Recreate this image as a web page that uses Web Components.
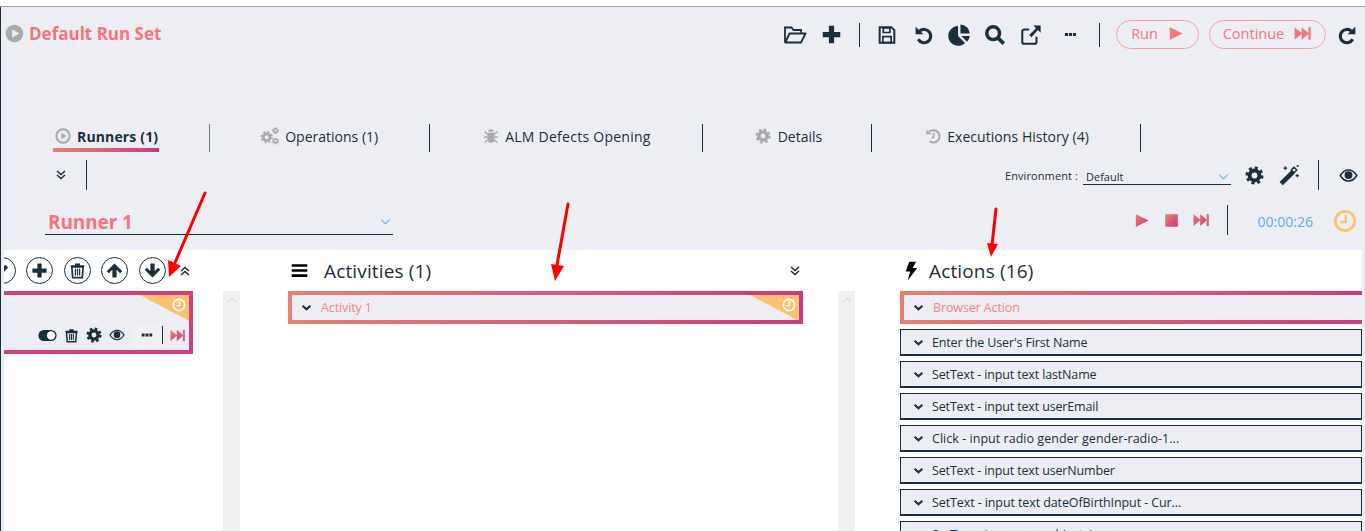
<!DOCTYPE html>
<html>
<head>
<meta charset="utf-8">
<title>Run Set</title>
<style>
    html, body { margin: 0; padding: 0; background: #fff; }
    body { font-family: "Open Sans", "Liberation Sans", sans-serif; color: #1a2e3b; }
</style>
</head>
<body>
<run-page></run-page>

<script>
const GEAR = '<circle cx="12" cy="12" r="6.2" fill="none" stroke="currentColor" stroke-width="5"/><circle cx="12" cy="12" r="9.6" fill="none" stroke="currentColor" stroke-width="3.6" stroke-dasharray="3.8 3.74"/>';

const ICONS = {
    folder: '<path d="M2 19.5V4.5h6.5l2 2.5H18v3.5" fill="none" stroke="currentColor" stroke-width="1.8"/><path d="M2.3 19.5 6.5 10.5H22.5L18 19.5Z" fill="none" stroke="currentColor" stroke-width="1.8" stroke-linejoin="round"/>',
    plus: '<path d="M9 2h6v7h7v6h-7v7H9v-7H2V9h7z" fill="currentColor"/>',
    save: '<path d="M3.2 2.6h14l3.6 3.6v15.2H3.2z" fill="none" stroke="currentColor" stroke-width="2.4"/><path d="M7.5 3.5h8V9h-8z" fill="none" stroke="currentColor" stroke-width="2"/><path d="M7 14h10v7H7z" fill="none" stroke="currentColor" stroke-width="2"/>',
    undo: '<path d="M7.5 8.2A7.6 7.6 0 1 1 6 17.5" fill="none" stroke="currentColor" stroke-width="3.6"/><path d="M3 3 12 11.8H3z" fill="currentColor"/>',
    redo: '<path d="M16.5 8.2A7.6 7.6 0 1 0 18 17.5" fill="none" stroke="currentColor" stroke-width="3.6"/><path d="M21 3 12 11.8H21z" fill="currentColor"/>',
    pie: '<path d="M10.5 3.2V13.5l7.3 7.3A10.3 10.3 0 1 1 10.5 3.2Z" fill="currentColor"/><path d="M13 1.5A10 10 0 0 1 22.7 11H13Z" fill="currentColor"/><path d="M14 13.5h8.7a10 10 0 0 1-2.900 6Z" fill="currentColor"/>',
    search: '<circle cx="10" cy="10" r="7" fill="none" stroke="currentColor" stroke-width="3.8"/><path d="M15 15 21.5 21.5" stroke="currentColor" stroke-width="4.2"/>',
    external: '<path d="M18 14v5.5a2 2 0 0 1-2 2H4.500a2 2 0 0 1-2-2V8a2 2 0 0 1 2-2H10" fill="none" stroke="currentColor" stroke-width="2.2"/><path d="M14.5 1.5h8v8l-3-3-7 8-2.500-2.500 7.500-7.500z" fill="currentColor"/>',
    dots: '<path d="M3 9.500h5v5H3zM9.500 9.500h5v5h-5zM16 9.500h5v5h-5z" fill="currentColor"/>',
    play: '<path d="M4 3 22 12 4 21Z" fill="currentColor"/>',
    forward: '<path d="M2 4 11.500 12 2 20ZM11 4 20 12 11 20Z" fill="currentColor"/><path d="M19.500 4h2.800v16h-2.800z" fill="currentColor"/>',
    stop: '<path d="M2 2h20v20H2z" fill="currentColor"/>',
    gear: GEAR,
    wand: '<path d="M3.5 21.5 16.5 8.5" stroke="currentColor" stroke-width="5"/><path d="M14.5 6.5 17.5 3.5l3 3-3 3z" fill="#edeef3" stroke="currentColor" stroke-width="1.5"/><path d="M8 2.500v4M6 4.500h4M21 11v3.500M19.200 12.700h3.600M21.500 1v2.400M20.300 2.200h2.400" stroke="currentColor" stroke-width="1.2"/>',
    eye: '<path d="M1.5 12C5 6.5 9 5 12 5s7 1.500 10.500 7C19 17.500 15 19 12 19S5 17.500 1.500 12Z" fill="none" stroke="currentColor" stroke-width="1.9"/><circle cx="12" cy="11.5" r="5" fill="currentColor"/>',
    clock: '<circle cx="12" cy="12" r="9.7" fill="none" stroke="currentColor" stroke-width="2.8"/><path d="M12.8 6v7H7.500" fill="none" stroke="currentColor" stroke-width="2.3"/>',
    toggle: '<rect x="0.5" y="5" width="23" height="14" rx="7" fill="currentColor"/><circle cx="16.5" cy="12" r="5.3" fill="#fff"/>',
    trash: '<path d="M4 7h16l-1.200 15H5.200Z" fill="none" stroke="currentColor" stroke-width="2.4"/><path d="M2.500 4.500h19v2.700h-19zM8.500 2h7v2.500h-7z" fill="currentColor"/><path d="M9 9.500V19M12 9.500V19M15 9.500V19" stroke="currentColor" stroke-width="1.8"/>',
    up: '<path d="M12 2 23 13l-3 3-5-5v11H9V11l-5 5-3-3Z" fill="currentColor"/>',
    down: '<path d="M12 22 1 11l3-3 5 5V2h6v11l5-5 3 3Z" fill="currentColor"/>',
    pencil: '<path d="M4 20 5.500 14.500 16 4l4 4L9.500 18.500Z" fill="currentColor"/>',
    chev: '<path d="M3.5 8 12 16 20.500 8" fill="none" stroke="currentColor" stroke-width="4.5"/>',
    chevthin: '<path d="M3 8 12 17 21 8" fill="none" stroke="currentColor" stroke-width="2.2"/>',
    chevup: '<path d="M3 16 12 7 21 16" fill="none" stroke="currentColor" stroke-width="2.2"/>',
    dchevdown: '<path d="M4 4 12 11 20 4M4 12 12 19 20 12" fill="none" stroke="currentColor" stroke-width="3"/>',
    dchevup: '<path d="M4 20 12 13 20 20M4 12 12 5 20 12" fill="none" stroke="currentColor" stroke-width="3"/>',
    bars: '<path d="M1 3h22v3.600H1zM1 10.200h22v3.600H1zM1 17.400h22v3.600H1z" fill="currentColor"/>',
    bolt: '<path d="M10 1h8l-4 7.500h5.500L8 23.500l3-11H5.500Z" fill="currentColor"/>',
    circleplay: '<circle cx="12" cy="12" r="11" fill="currentColor"/><path d="M9 6.500 18 12 9 17.500Z" fill="#edeef3"/>',
    ringplay: '<circle cx="12" cy="12" r="10" fill="none" stroke="currentColor" stroke-width="3"/><path d="M9.500 7 17 12 9.500 17Z" fill="currentColor"/>',
    bug: '<path d="M8 5.500a4 3.500 0 0 1 8 0Z" fill="currentColor"/><path d="M6.500 7h11v9.500a5.500 5.500 0 0 1-11 0Z" fill="currentColor"/><path d="M6.500 9 2.500 5.500M17.500 9l4-3.500M6 13.500H1.500M18 13.500h4.500M6.800 18 2.500 22M17.200 18l4.300 4" stroke="currentColor" stroke-width="2.2"/>',
    cogs: '<g transform="translate(-1 5) scale(.72)">' + GEAR + '</g><g transform="translate(14.5 0) scale(.4)">' + GEAR + '</g><g transform="translate(14.5 14) scale(.4)">' + GEAR + '</g>',
    history: '<path d="M6.500 5.500A9.300 9.300 0 1 1 7 20" fill="none" stroke="currentColor" stroke-width="3"/><path d="M2 2.500 10 9.500H2z" fill="currentColor"/><path d="M13 7.500V13l-3 2.500" fill="none" stroke="currentColor" stroke-width="2.3"/>'
};

// icone svg, la couleur vient de color ou du degrade (attribut grad)
class RsIcon extends HTMLElement {
    constructor() {
        super();
        this.attachShadow({ mode: 'open' });
    }

    connectedCallback() {
        const size = this.getAttribute('size') || 18;
        const grad = this.hasAttribute('grad');
        this.shadowRoot.innerHTML = `
            <style>
                :host { display: inline-flex; flex: none; width: ${size}px; height: ${size}px; }
                svg { width: 100%; height: 100%; display: block; overflow: visible; }
                ${grad ? 'svg [fill="currentColor"] { fill: url(#g); }' : ''}
            </style>
            <svg viewBox="0 0 24 24">
                <defs>
                    <linearGradient id="g" x1="0" y1="0" x2="1" y2="1">
                        <stop offset="0" stop-color="#e8806f"/>
                        <stop offset="1" stop-color="#cb3a80"/>
                    </linearGradient>
                </defs>
                ${ICONS[this.getAttribute('name')] || ''}
            </svg>
        `;
    }
}
customElements.define('rs-icon', RsIcon);

class RsPillButton extends HTMLElement {
    constructor() {
        super();
        this.attachShadow({ mode: 'open' });
        this.shadowRoot.innerHTML = `
            <style>
                :host {
                    display: inline-flex;
                    align-items: center;
                    justify-content: center;
                    gap: 9px;
                    height: 29px;
                    box-sizing: border-box;
                    border: 1px solid #f7a0a4;
                    border-radius: 15px;
                    background: #edeef3;
                    color: #f7747a;
                    font-size: 14.5px;
                    padding-bottom: 2px;
                }
            </style>
            <slot></slot>
        `;
    }
}
customElements.define('rs-pill-button', RsPillButton);

class RsTab extends HTMLElement {
    constructor() {
        super();
        this.attachShadow({ mode: 'open' });
    }

    connectedCallback() {
        const active = this.hasAttribute('active');
        this.shadowRoot.innerHTML = `
            <style>
                :host {
                    display: flex;
                    align-items: center;
                    height: 28px;
                    padding: 0 50px 0 51px;
                    border-right: 1px solid #1a2e3b;
                    font-size: 14px;
                    white-space: nowrap;
                    color: #1a2e3b;
                }
                :host([active]) {
                    padding: 0 50px 0 0;
                    font-weight: 700;
                    letter-spacing: 0.15px;
                    border-right-color: #6c7680;
                }
                .inner {
                    display: flex;
                    align-items: center;
                    gap: var(--tab-gap, 6px);
                    height: 28px;
                    box-sizing: border-box;
                    padding: 0 1px 0 2px;
                    border-bottom: 4px solid transparent;
                    ${active ? 'border-image: linear-gradient(90deg, #e8806f, #cb3a80) 1;' : ''}
                }
                rs-icon { color: #a9a9a9; }
            </style>
            <div class="inner">
                <rs-icon name="${this.getAttribute('icon')}" size="${this.getAttribute('size') || 16}"></rs-icon>
                <span><slot></slot></span>
            </div>
        `;
    }
}
customElements.define('rs-tab', RsTab);

// carte avec bordure en degrade
class RsCard extends HTMLElement {
    constructor() {
        super();
        this.attachShadow({ mode: 'open' });
        this.shadowRoot.innerHTML = `
            <style>
                :host {
                    display: flex;
                    align-items: center;
                    gap: 9px;
                    position: relative;
                    box-sizing: border-box;
                    height: 33px;
                    padding: 0 0 0 9px;
                    border: 4px solid;
                    border-image: linear-gradient(90deg, #e8806f, #cb3a80) 1;
                    background: #edeef3;
                    color: #f7848a;
                    font-size: 12.5px;
                    letter-spacing: -0.12px;
                    overflow: hidden;
                }
                rs-icon { color: #1a2e3b; }
            </style>
            <rs-icon name="chev" size="11"></rs-icon>
            <slot></slot>
        `;
    }
}
customElements.define('rs-card', RsCard);

class RsCorner extends HTMLElement {
    constructor() {
        super();
        this.attachShadow({ mode: 'open' });
        this.shadowRoot.innerHTML = `
            <style>
                :host { position: absolute; top: 0; right: 0; width: 49px; height: 26px; display: block; }
                .tri { position: absolute; inset: 0; background: #fdc271; clip-path: polygon(0 0, 100% 0, 100% 100%); }
                rs-icon { position: absolute; top: 3px; right: 3px; color: #fff; }
            </style>
            <div class="tri"></div>
            <rs-icon name="clock" size="14"></rs-icon>
        `;
    }
}
customElements.define('rs-corner', RsCorner);

class RsActionRow extends HTMLElement {
    constructor() {
        super();
        this.attachShadow({ mode: 'open' });
        this.shadowRoot.innerHTML = `
            <style>
                :host {
                    display: flex;
                    flex: none;
                    align-items: center;
                    gap: 8px;
                    box-sizing: border-box;
                    height: 27px;
                    padding: 0 0 0 12px;
                    border: 1px solid #1a2e3b;
                    border-bottom-width: 2px;
                    background: #edeef3;
                    font-size: 12.5px;
                    letter-spacing: -0.15px;
                    white-space: nowrap;
                }
            </style>
            <rs-icon name="chev" size="11"></rs-icon>
            <slot></slot>
        `;
    }
}
customElements.define('rs-action-row', RsActionRow);

class RsRoundButton extends HTMLElement {
    constructor() {
        super();
        this.attachShadow({ mode: 'open' });
    }

    connectedCallback() {
        this.shadowRoot.innerHTML = `
            <style>
                :host {
                    display: inline-flex;
                    flex: none;
                    align-items: center;
                    justify-content: center;
                    box-sizing: border-box;
                    width: 27px;
                    height: 27px;
                    border: 1px solid #1a2e3b;
                    border-radius: 50%;
                    background: #fff;
                    color: #1a2e3b;
                }
            </style>
            <rs-icon name="${this.getAttribute('icon')}" size="17"></rs-icon>
        `;
    }
}
customElements.define('rs-round-button', RsRoundButton);

class RsScrollTrack extends HTMLElement {
    constructor() {
        super();
        this.attachShadow({ mode: 'open' });
        this.shadowRoot.innerHTML = `
            <style>
                :host {
                    display: flex;
                    flex: none;
                    justify-content: center;
                    width: 17px;
                    padding-top: 4px;
                    background: #f1f1f1;
                    color: #cfcfcf;
                    box-sizing: border-box;
                }
            </style>
            <rs-icon name="chevup" size="10"></rs-icon>
        `;
    }
}
customElements.define('rs-scroll-track', RsScrollTrack);

class RunHeader extends HTMLElement {
    constructor() {
        super();
        this.attachShadow({ mode: 'open' });
        this.shadowRoot.innerHTML = `
            <style>
                :host {
                    display: flex;
                    justify-content: space-between;
                    align-items: flex-start;
                    height: 117px;
                    box-sizing: border-box;
                    padding: 13px 7px 0 4px;
                }
                .title {
                    display: flex;
                    align-items: center;
                    gap: 5px;
                    height: 27px;
                    color: #f7747a;
                    font-size: 17px;
                    font-weight: 700;
                }
                .title rs-icon { color: #a9a9a9; }
                .tools { display: flex; align-items: center; height: 29px; }
                .cell { display: flex; justify-content: center; width: 36px; }
                .sep { width: 1px; height: 24px; background: #1a2e3b; }
                .btn-run { width: 83px; margin-left: 16px; }
                .btn-continue { width: 117px; margin-left: 10px; margin-right: 11px; }
            </style>
            <div class="title">
                <rs-icon name="circleplay" size="19"></rs-icon>
                <span>Default Run Set</span>
            </div>
            <div class="tools">
                <div class="cell"><rs-icon name="folder" size="24"></rs-icon></div>
                <div class="cell"><rs-icon name="plus" size="21"></rs-icon></div>
                <div class="sep" style="margin: 0 9px 0 10px"></div>
                <div class="cell"><rs-icon name="save" size="20"></rs-icon></div>
                <div class="cell"><rs-icon name="undo" size="21"></rs-icon></div>
                <div class="cell"><rs-icon name="pie" size="23"></rs-icon></div>
                <div class="cell"><rs-icon name="search" size="22"></rs-icon></div>
                <div class="cell"><rs-icon name="external" size="22"></rs-icon></div>
                <div class="cell" style="margin-left: 3px"><rs-icon name="dots" size="15"></rs-icon></div>
                <div class="sep" style="margin: 0 0 0 11px"></div>
                <rs-pill-button class="btn-run">Run <rs-icon name="play" size="17"></rs-icon></rs-pill-button>
                <rs-pill-button class="btn-continue">Continue <rs-icon name="forward" size="19"></rs-icon></rs-pill-button>
                <rs-icon name="redo" size="21"></rs-icon>
            </div>
        `;
    }
}
customElements.define('run-header', RunHeader);

class RunTabs extends HTMLElement {
    constructor() {
        super();
        this.attachShadow({ mode: 'open' });
        this.shadowRoot.innerHTML = `
            <style>
                :host { display: flex; height: 28px; padding-left: 52px; }
            </style>
            <rs-tab active icon="ringplay">Runners (1)</rs-tab>
            <rs-tab icon="cogs" size="18" style="padding-left: 49px">Operations (1)</rs-tab>
            <rs-tab icon="bug" style="letter-spacing: 0.26px">ALM Defects Opening</rs-tab>
            <rs-tab icon="gear" style="padding: 0 48px 0 50px; --tab-gap: 7px">Details</rs-tab>
            <rs-tab icon="history" style="letter-spacing: 0.05px">Executions History (4)</rs-tab>
        `;
    }
}
customElements.define('run-tabs', RunTabs);

class EnvBar extends HTMLElement {
    constructor() {
        super();
        this.attachShadow({ mode: 'open' });
        this.shadowRoot.innerHTML = `
            <style>
                :host {
                    display: flex;
                    align-items: center;
                    height: 30px;
                    margin-top: 8px;
                    padding-left: 54px;
                    font-size: 11px;
                }
                .sep { width: 1px; height: 30px; background: #1a2e3b; flex: none; }
                .label { margin-left: auto; white-space: nowrap; letter-spacing: 0.1px; }
                .select {
                    display: flex;
                    align-items: center;
                    justify-content: space-between;
                    box-sizing: border-box;
                    width: 148px;
                    height: 20px;
                    margin: 0 14px 0 5px;
                    padding: 3px 2px 0 3px;
                    border-bottom: 1px solid #1a2e3b;
                }
                .select rs-icon { color: #5aa9f8; }
            </style>
            <rs-icon name="dchevdown" size="12"></rs-icon>
            <div class="sep" style="margin-left: 19px"></div>
            <span class="label">Environment :</span>
            <div class="select"><span>Default</span><rs-icon name="chevthin" size="11"></rs-icon></div>
            <rs-icon name="gear" size="19"></rs-icon>
            <rs-icon name="wand" size="22" style="margin-left: 14px"></rs-icon>
            <div class="sep" style="margin: 0 20px 0 18px"></div>
            <rs-icon name="eye" size="19" style="margin-right: 7px"></rs-icon>
        `;
    }
}
customElements.define('env-bar', EnvBar);

class RunnerBar extends HTMLElement {
    constructor() {
        super();
        this.attachShadow({ mode: 'open' });
        this.shadowRoot.innerHTML = `
            <style>
                :host {
                    display: flex;
                    align-items: flex-start;
                    height: 45px;
                    margin-top: 15px;
                    padding-left: 44px;
                }
                .select {
                    display: flex;
                    align-items: center;
                    justify-content: space-between;
                    box-sizing: border-box;
                    width: 348px;
                    height: 30px;
                    padding: 4px 2px 0 3px;
                    border-bottom: 1px solid #1a2e3b;
                    color: #f7747a;
                    font-size: 19px;
                    font-weight: 700;
                    letter-spacing: -0.1px;
                }
                .select rs-icon { color: #5aa9f8; }
                .ctl { display: flex; align-items: center; height: 30px; margin-left: auto; }
                .sep { width: 1px; height: 30px; background: #1a2e3b; }
                .time { color: #5aa9f8; font-size: 14px; margin: 2px 0 0 30px; }
                .clock { color: #fdc271; margin: 2px 8px 0 20px; }
            </style>
            <div class="select"><span>Runner 1</span><rs-icon name="chevthin" size="11"></rs-icon></div>
            <div class="ctl">
                <rs-icon grad name="play" size="17"></rs-icon>
                <rs-icon grad name="stop" size="15" style="margin-left: 14px"></rs-icon>
                <rs-icon grad name="forward" size="18" style="margin-left: 13px"></rs-icon>
                <div class="sep" style="margin-left: 17px"></div>
                <span class="time">00:00:26</span>
                <rs-icon class="clock" name="clock" size="24"></rs-icon>
            </div>
        `;
    }
}
customElements.define('runner-bar', RunnerBar);

class RunPanels extends HTMLElement {
    constructor() {
        super();
        this.attachShadow({ mode: 'open' });
        this.shadowRoot.innerHTML = `
            <style>
                :host {
                    display: grid;
                    grid-template-columns: 236px 615px 1fr;
                    height: 281px;
                    margin: 0 3px 0 3px;
                    background: #fff;
                    overflow: hidden;
                }
                .col { display: grid; grid-template-rows: 41px 1fr; min-width: 0; }
                .head { display: flex; align-items: center; }
                .body { display: flex; align-items: flex-start; min-height: 0; }
                .title { font-size: 19px; letter-spacing: 0.15px; white-space: nowrap; }

                .runners { overflow: hidden; }
                .runners .head { gap: 10.5px; margin-left: -15.5px; }
                .runners .body { justify-content: space-between; align-items: stretch; }
                .runner-card {
                    position: relative;
                    flex: none;
                    box-sizing: border-box;
                    width: 189px;
                    height: 63px;
                    align-self: flex-start;
                    border: 4px solid #cf4080;
                    border-left: 0;
                    background: #edeef3;
                }
                .runner-tools {
                    display: flex;
                    align-items: center;
                    position: absolute;
                    left: 34px;
                    bottom: 0;
                    height: 30px;
                }
                .more {
                    display: flex;
                    align-items: center;
                    justify-content: flex-end;
                    box-sizing: border-box;
                    width: 30px;
                    height: 24px;
                    padding-right: 8px;
                    background: #f0f0f2;
                    margin-left: 7px;
                }
                .vsep { width: 1px; height: 18px; background: #1a2e3b; margin: 0 6px 0 0; }

                .activities { padding-left: 48px; }
                .activities .head { width: 515px; padding-left: 3px; box-sizing: border-box; }
                .activities .title { margin-left: 16px; }
                .activities .dbl { margin-left: auto; margin-right: 2px; }
                .activities .body { justify-content: space-between; align-items: stretch; }
                .activities rs-card { width: 515px; }

                .actions { padding-left: 45px; min-width: 0; }
                .actions .head { padding-left: 1px; }
                .actions .title { margin-left: 8px; }
                .list { display: flex; flex-direction: column; gap: 5px; flex: 1; min-width: 0; }
                .list rs-card { border-right: 0; flex: none; }
            </style>

            <section class="col runners">
                <div class="head">
                    <rs-round-button icon="pencil"></rs-round-button>
                    <rs-round-button icon="plus"></rs-round-button>
                    <rs-round-button icon="trash"></rs-round-button>
                    <rs-round-button icon="up"></rs-round-button>
                    <rs-round-button icon="down"></rs-round-button>
                    <rs-icon name="dchevup" size="12" style="margin-left: 3px"></rs-icon>
                </div>
                <div class="body">
                    <div class="runner-card">
                        <rs-corner></rs-corner>
                        <div class="runner-tools">
                            <rs-icon name="toggle" size="19"></rs-icon>
                            <rs-icon name="trash" size="15" style="margin-left: 7px"></rs-icon>
                            <rs-icon name="gear" size="16" style="margin-left: 7px"></rs-icon>
                            <rs-icon name="eye" size="16" style="margin-left: 7px"></rs-icon>
                            <div class="more"><rs-icon name="dots" size="14"></rs-icon></div>
                            <div class="vsep"></div>
                            <rs-icon grad name="forward" size="17"></rs-icon>
                        </div>
                    </div>
                    <rs-scroll-track></rs-scroll-track>
                </div>
            </section>

            <section class="col activities">
                <div class="head">
                    <rs-icon name="bars" size="17" style="color: #000"></rs-icon>
                    <span class="title">Activities (1)</span>
                    <rs-icon class="dbl" name="dchevdown" size="12"></rs-icon>
                </div>
                <div class="body">
                    <rs-card>Activity 1<rs-corner></rs-corner></rs-card>
                    <rs-scroll-track></rs-scroll-track>
                </div>
            </section>

            <section class="col actions">
                <div class="head">
                    <rs-icon name="bolt" size="20" style="color: #000"></rs-icon>
                    <span class="title">Actions (16)</span>
                </div>
                <div class="body">
                    <div class="list">
                        <rs-card>Browser Action</rs-card>
                        <rs-action-row>Enter the User's First Name</rs-action-row>
                        <rs-action-row>SetText - input text lastName</rs-action-row>
                        <rs-action-row>SetText - input text userEmail</rs-action-row>
                        <rs-action-row style="letter-spacing: 0.03px">Click - input radio gender gender-radio-1...</rs-action-row>
                        <rs-action-row>SetText - input text userNumber</rs-action-row>
                        <rs-action-row style="letter-spacing: -0.1px">SetText - input text dateOfBirthInput - Cur...</rs-action-row>
                        <rs-action-row>SetText - input text subjectsInput</rs-action-row>
                    </div>
                </div>
            </section>
        `;
    }
}
customElements.define('run-panels', RunPanels);

// fleches rouges ajoutees sur la capture
class RedArrows extends HTMLElement {
    constructor() {
        super();
        this.attachShadow({ mode: 'open' });
        this.shadowRoot.innerHTML = `
            <style>
                :host { position: absolute; left: 0; top: 0; display: block; width: 1365px; height: 531px; pointer-events: none; }
                svg { display: block; width: 100%; height: 100%; }
            </style>
            <svg viewBox="0 0 1365 531">
                <g stroke="#f00" stroke-width="3" stroke-linecap="round">
                    <path d="M205 193 174 265"/>
                    <path d="M568 204 557 265"/>
                    <path d="M996 209 992 245"/>
                </g>
                <g fill="#f00">
                    <path d="M169 277 168 260 181 266Z"/>
                    <path d="M555 281 551 264 564 266Z"/>
                    <path d="M991 257 987 243 998 244Z"/>
                </g>
            </svg>
        `;
    }
}
customElements.define('red-arrows', RedArrows);

class RunPage extends HTMLElement {
    constructor() {
        super();
        this.attachShadow({ mode: 'open' });
        this.shadowRoot.innerHTML = `
            <style>
                :host {
                    display: block;
                    position: relative;
                    width: 1365px;
                    height: 531px;
                    overflow: hidden;
                    background: #fff;
                }
                .strip { height: 6px; background: #fff; border-bottom: 1px solid #a0a5ad; }
                .main {
                    height: 524px;
                    box-sizing: border-box;
                    background: #edeef3;
                    border-left: 1px solid #1a2e3b;
                }
            </style>
            <div class="strip"></div>
            <div class="main">
                <run-header></run-header>
                <run-tabs></run-tabs>
                <env-bar></env-bar>
                <runner-bar></runner-bar>
                <run-panels></run-panels>
            </div>
            <red-arrows></red-arrows>
        `;
    }
}
customElements.define('run-page', RunPage);
</script>
</body>
</html>
